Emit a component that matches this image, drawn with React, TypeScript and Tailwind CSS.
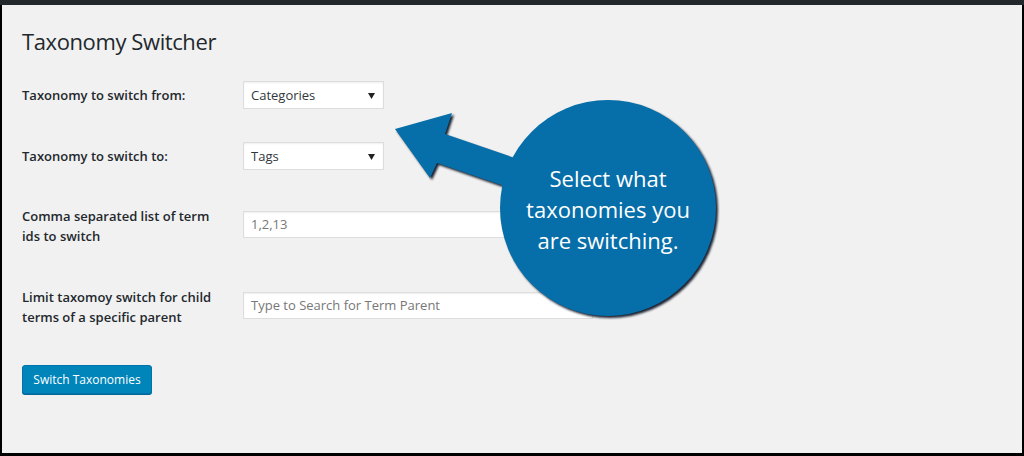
const labelCls = "w-[221px] shrink-0 text-[13px] font-semibold leading-5 text-[#23282d]";

const SelectBox = ({ value }: { value: string }) => (
  <div className="flex h-[28px] w-[141px] items-center justify-between border border-[#dddddd] bg-white pl-[7px] pr-[8px] pt-[2px] text-[13px] text-[#32373c] shadow-[inset_0_1px_2px_rgba(0,0,0,0.07)]">
    <span>{value}</span>
    <svg width="7" height="6" viewBox="0 0 7 6">
      <path d="M0 0h7L3.5 6z" fill="#222" />
    </svg>
  </div>
);

const TextBox = ({ text }: { text: string }) => (
  <div className="flex h-[27px] w-[350px] items-center border border-[#dddddd] bg-white px-[7px] pt-[1px] text-[13px] text-[#777] shadow-[inset_0_1px_2px_rgba(0,0,0,0.07)]">
    {text}
  </div>
);

const Callout = () => (
  <div className="pointer-events-none absolute inset-0">
    <svg width="1024" height="456" className="absolute left-0 top-0">
      <defs>
        <filter id="sh" x="-20%" y="-20%" width="140%" height="140%">
          <feGaussianBlur stdDeviation="1" />
        </filter>
      </defs>
      <g filter="url(#sh)" fill="#1b2430">
        <polygon points="397,131 454,115 447,136 543,169 532,197 439,165 432,180" />
        <circle cx="610" cy="210" r="108" />
      </g>
      <polygon points="395,129 452,113 445,134 541,167 530,195 437,163 430,178" fill="#066ea9" />
      <circle cx="608" cy="208" r="108" fill="#066ea9" />
    </svg>
    <div className="absolute left-[500px] top-[163px] w-[216px] text-center font-['Open_Sans',sans-serif] text-[22px] leading-[31px] text-white">
      Select what
      <br />
      taxonomies you
      <br />
      are switching.
    </div>
  </div>
);

export default function App() {
  return (
    <div className="relative h-[456px] w-[1024px] overflow-hidden bg-black font-['Open_Sans',sans-serif]">
      <div className="h-[5px] bg-[#23282d]" />
      <div className="ml-[2px] mr-[2px] flex h-[448px] flex-col bg-[#f1f1f1] pl-[20px]">
        <h1 className="mt-[22px] text-[22px] font-normal leading-[29px] tracking-[-0.4px] text-[#23282d]">Taxonomy Switcher</h1>

        <div className="mt-[25px] flex items-center">
          <div className={labelCls}>Taxonomy to switch from:</div>
          <SelectBox value="Categories" />
        </div>

        <div className="mt-[33px] flex items-center">
          <div className={labelCls}>Taxonomy to switch to:</div>
          <SelectBox value="Tags" />
        </div>

        <div className="mt-[36px] flex items-start">
          <div className={labelCls}>
            Comma separated list of term
            <br />
            ids to switch
          </div>
          <div className="mt-[5px]">
            <TextBox text="1,2,13" />
          </div>
        </div>

        <div className="mt-[41px] flex items-start">
          <div className={labelCls}>
            Limit taxomoy switch for child
            <br />
            terms of a specific parent
          </div>
          <div className="mt-[5px]">
            <TextBox text="Type to Search for Term Parent" />
          </div>
        </div>

        <div className="mt-[38px]">
          <button className="h-[29px] w-[130px] rounded-[3px] border border-[#0073aa] bg-[#0085ba] text-[12px] text-white shadow-[0_1px_0_#006799]">
            Switch Taxonomies
          </button>
        </div>
      </div>
      <Callout />
    </div>
  );
}
